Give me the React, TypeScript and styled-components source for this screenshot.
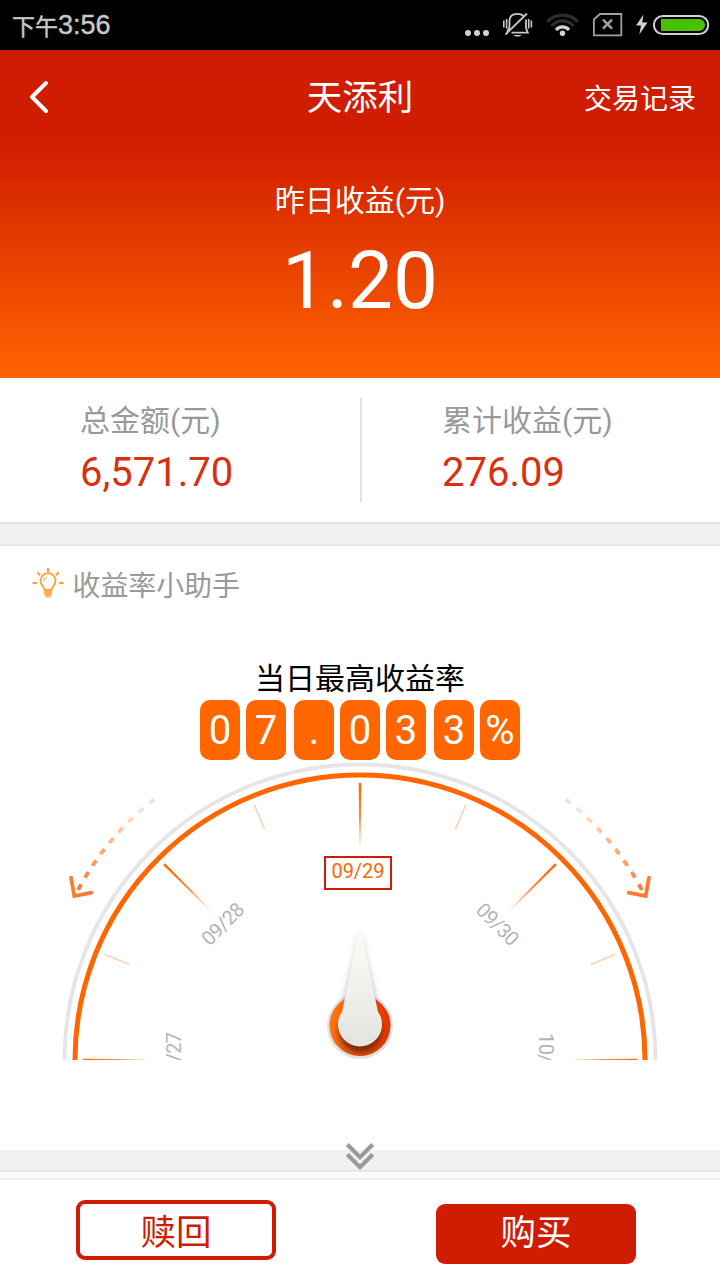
import React from 'react';
import styled, { createGlobalStyle } from 'styled-components';

const RED = '#d01c00';
const ORANGE = '#ff6600';

const GlobalStyle = createGlobalStyle`
  * { box-sizing: border-box; }
  body {
    margin: 0;
    background: #fff;
    font-family: Roboto, "Noto Sans CJK SC", sans-serif;
  }
`;

const Screen = styled.div`
  width: 720px;
  height: 1280px;
  display: flex;
  flex-direction: column;
  overflow: hidden;
  background: #fff;
`;

const StatusBar = styled.div`
  height: 50px;
  flex: none;
  display: flex;
  align-items: center;
  justify-content: space-between;
  padding: 0 10px 0 12px;
  background: #000;
`;

const Clock = styled.div`
  display: flex;
  align-items: center;
  height: 50px;
  color: #c8c8c8;
  font: 27px/50px "Liberation Sans", sans-serif;
  -webkit-text-stroke: 0.4px #c8c8c8;
`;

const ClockPeriod = styled.span`
  font: 400 23px/48px "Noto Sans CJK SC", sans-serif;
`;

const StatusIcons = styled.div`
  display: flex;
  height: 50px;
`;

const Hero = styled.header`
  height: 328px;
  flex: none;
  display: flex;
  flex-direction: column;
  color: #fff;
  background: linear-gradient(#c61a04 0, #d01c02 20px, #d01c00 90px, #ff6400 328px);
`;

const NavBar = styled.nav`
  height: 94px;
  display: grid;
  grid-template-columns: 1fr auto 1fr;
  grid-template-rows: 94px;
  align-items: center;
  padding: 0 24px 0 28px;
`;

const NavTitle = styled.h1`
  margin: 0 4px 0 0;
  padding-top: 3px;
  font-size: 35.5px;
  font-weight: 400;
  line-height: 91px;
`;

const NavLink = styled.span`
  justify-self: end;
  padding-top: 6px;
  font-size: 28px;
  line-height: 88px;
`;

const HeroLabel = styled.div`
  margin-top: 37px;
  text-align: center;
  font-size: 30px;
  line-height: 40px;
`;

const HeroValue = styled.div`
  margin-top: 12px;
  text-align: center;
  font-size: 80px;
  line-height: 96px;
`;

const Stats = styled.section`
  height: 144px;
  flex: none;
  display: flex;
  padding: 20px 0;
`;

const Stat = styled.div<{ $divided?: boolean }>`
  width: ${p => (p.$divided ? 362 : 358)}px;
  padding-top: 1px;
  padding-left: 80px;
  border-right: ${p => (p.$divided ? '2px solid #e2e2e2' : 'none')};
`;

const StatLabel = styled.div`
  color: #999;
  font-size: 30px;
  line-height: 44px;
`;

const StatValue = styled.div`
  margin-top: 4px;
  color: #d93010;
  font-size: 40px;
  line-height: 52px;
`;

const SectionGap = styled.div`
  height: 24px;
  flex: none;
  border-top: 2px solid #e2e2e2;
  border-bottom: 2px solid #e8e8e8;
  background: #f0f0f0;
`;

const Helper = styled.section`
  height: 604px;
  flex: none;
  display: flex;
  flex-direction: column;
`;

const HelperTitle = styled.div`
  display: flex;
  align-items: center;
  gap: 8.5px;
  height: 76px;
  padding-left: 32px;
  color: #999;
  font-size: 28px;
`;

const HelperText = styled.span`
  padding-top: 5px;
  line-height: 71px;
  letter-spacing: -0.1px;
`;

const RateLabel = styled.div`
  margin-top: 35px;
  height: 43px;
  text-align: center;
  color: #000;
  font-size: 30px;
  line-height: 44px;
`;

const Digits = styled.div`
  display: flex;
  justify-content: center;
`;

const Digit = styled.span<{ $wide?: boolean }>`
  width: 40px;
  height: 60px;
  margin-left: ${p => (p.$wide ? 8 : 6)}px;
  border-radius: 10px;
  background: ${ORANGE};
  color: #fff;
  text-align: center;
  font-size: 40px;
  line-height: 62px;
  &:first-child { margin-left: 0; }
`;

const Gauge = styled.svg`
  display: block;
  flex: none;
  font-family: Roboto, sans-serif;
  font-size: 20px;
`;

const DayLabels = styled.g`
  fill: #b4b4b4;
  letter-spacing: -0.6px;
`;

const MoreStrip = styled.div`
  height: 22px;
  flex: none;
  display: flex;
  justify-content: center;
  background: #f0f0f0;
  border-bottom: 2px solid #e8e8e8;
`;

const MoreIcon = styled.svg`
  margin-top: -8px;
  flex: none;
`;

const Footer = styled.footer`
  flex: 1;
  border-top: 6px solid #fffaf7;
`;

const Actions = styled.div`
  display: flex;
  justify-content: space-between;
  align-items: flex-start;
  height: 102px;
  padding: 20px 84px 0 76px;
  border-top: 2px solid #eee;
`;

const ActionButton = styled.button<{ $primary?: boolean }>`
  width: 200px;
  height: 60px;
  margin: ${p => (p.$primary ? 4 : 0)}px 0 0;
  padding: ${p => (p.$primary ? '0 0 3px' : '6px 0 0')};
  border: ${p => (p.$primary ? 'none' : `4px solid ${RED}`)};
  border-radius: 9px;
  background: ${p => (p.$primary ? RED : '#fff')};
  color: ${p => (p.$primary ? '#fff' : RED)};
  font-family: inherit;
  font-size: 35.5px;
  line-height: 46px;
`;

const BellOff = () => (
  <svg width="45" height="50" viewBox="495 0 45 50" fill="none" stroke="#c8c8c8" strokeWidth="1.800">
    <path d="M509.500 27.500V21c0-5 3.500-7.200 8-7.200 2.500 0 4.500.8 6 2.200M526 19.500v8.500l1.800 4.700h-16.300" />
    <path d="M509.500 27l-2.300 5M505.500 34.500l21.500-21" />
    <path d="M503.800 20.500v7M506.600 19v9.500M528.700 19v9.500M531.400 20.500v7" strokeWidth="1.600" />
    <path d="M513.500 35h8c-1 2-7 2-8 0z" fill="#c8c8c8" stroke="none" />
  </svg>
);

const Wifi = () => (
  <svg width="46" height="50" viewBox="540 0 46 50" fill="none" strokeWidth="3.200">
    <path d="M547.300 21.700a21 21 0 0 1 30.400 0" stroke="#2e2e2e" />
    <path d="M551.500 26a14.500 14.500 0 0 1 22 0" stroke="#2e2e2e" />
    <path d="M556 30a8.300 8.300 0 0 1 13 0" stroke="#d2d2d2" />
    <circle cx="562.500" cy="33.300" r="2.700" fill="#d2d2d2" />
  </svg>
);

const NoSim = () => (
  <svg width="47" height="50" viewBox="586 0 47 50" fill="none" stroke="#a0a0a0">
    <path d="M600 14H621.300V35.300H593.900V19.500Z" strokeWidth="1.800" />
    <path d="M603 19.700l9 9M612 19.700l-9 9" strokeWidth="2.600" />
  </svg>
);

const Battery = () => (
  <svg width="77" height="50" viewBox="633 0 77 50">
    <path d="M643.500 14.500l-7.500 11h5l-1.700 9 8.200-12h-5.300z" fill="#d2d2d2" />
    <rect x="653.900" y="15.900" width="54.300" height="18.200" rx="9.100" fill="none" stroke="#d2d2d2" strokeWidth="2" />
    <path d="M661 19h38a6 6 0 0 1 0 12h-38z" fill="#48c200" />
  </svg>
);

const Bulb = () => (
  <svg width="32" height="36" viewBox="32 566 32 36" fill="none" stroke="#ffa037" strokeWidth="2">
    <path d="M44.500 590c0-3-4-4.500-4-9.300a7.500 7.500 0 0 1 15 0c0 4.800-4 6.300-4 9.300z" strokeWidth="1.800" />
    <path d="M44 590h8v4l-2 3.500h-4l-2-3.500z" fill="#ffb054" stroke="none" />
    <path d="M43.700 581a4 4 0 0 1 3.300-3.700" strokeWidth="1" />
    <path d="M48 568v4.300M37.200 572.200l3 3M58.800 572.200l-3 3M32.500 583h4.500M59 583h4.500" />
  </svg>
);

const CX = 360;
const CY = 1060;

const SwipeArrow = () => (
  <g fill="none">
    <path d="M154.300 799.300Q106 837 77.500 891" stroke="url(#fade)" strokeWidth="3.800" strokeDasharray="6.500 7.600" />
    <path d="M71 877.700L74.300 896L91.300 892.700" stroke="#ff7a30" strokeWidth="3.800" strokeLinecap="round" />
  </g>
);

const Dial = () => (
  <Gauge width="720" height="300" viewBox="0 760 720 300">
    <defs>
      <linearGradient id="fade" gradientUnits="userSpaceOnUse" x1="154" y1="800" x2="78" y2="890">
        <stop offset="0" stopColor="#e9e7e5" />
        <stop offset=".18" stopColor="#ffe2d0" />
        <stop offset=".55" stopColor="#ffb080" />
        <stop offset="1" stopColor="#ff7a30" />
      </linearGradient>
      <linearGradient id="tick" gradientUnits="userSpaceOnUse" x1="0" y1="783" x2="0" y2="850">
        <stop offset="0" stopColor="#ff6600" />
        <stop offset=".5" stopColor="#ff8a3c" />
        <stop offset="1" stopColor="#ff8a3c" stopOpacity="0" />
      </linearGradient>
      <linearGradient id="hub">
        <stop offset="0" stopColor="#ff7614" />
        <stop offset="1" stopColor="#e03600" />
      </linearGradient>
      <linearGradient id="needle" x1="0" y1="0" x2="0" y2="1">
        <stop offset="0" stopColor="#fdfdfa" />
        <stop offset="1" stopColor="#e3e3df" />
      </linearGradient>
      <filter id="shadow" x="-50%" y="-20%" width="200%" height="140%">
        <feGaussianBlur stdDeviation="3.200" />
      </filter>
      <clipPath id="hubClip">
        <circle cx="360" cy="1025.500" r="30.500" />
      </clipPath>
    </defs>

    <circle cx={CX} cy={CY} r="295.500" fill="none" stroke="#e5e5e5" strokeWidth="3.800" />
    <circle cx={CX} cy={CY} r="285" fill="none" stroke={ORANGE} strokeWidth="5" />

    {[-90, -45, 0, 45, 90].map(a => (
      <path key={a} d="M358.700 783h2.600l-.6 67h-1.400z" fill="url(#tick)" transform={`rotate(${a} ${CX} ${CY})`} />
    ))}
    {[-67.5, -22.5, 22.5, 67.5].map(a => (
      <path key={a} d="M360 783.500V810.500" stroke="#ffd2b4" strokeWidth="1.700" transform={`rotate(${a} ${CX} ${CY})`} />
    ))}

    <SwipeArrow />
    <g transform="translate(720 0) scale(-1 1)"><SwipeArrow /></g>

    <rect x="325" y="857" width="66" height="32" fill="#fff" stroke={RED} strokeWidth="2" />
    <text x="358" y="878" textAnchor="middle" fill={ORANGE}>09/29</text>
    <DayLabels>
      <text textAnchor="middle" transform="translate(227.500 929) rotate(-45)">09/28</text>
      <text textAnchor="middle" transform="translate(492.500 929) rotate(45)">09/30</text>
      <text textAnchor="end" transform="translate(181 1032.500) rotate(-90)">09/27</text>
      <text transform="translate(539 1033) rotate(90)">10/01</text>
    </DayLabels>

    <circle cx="360" cy="1026" r="33" fill="#e0e0e0" />
    <path d="M360 934L379 1012H341Z" fill="#777" opacity=".5" filter="url(#shadow)" />
    <circle cx="360" cy="1025.500" r="30.500" fill="url(#hub)" />
    <g clipPath="url(#hubClip)">
      <circle cx="360" cy="1032" r="21" fill="#4a1400" opacity=".7" filter="url(#shadow)" />
    </g>
    <path d="M359.500 926h1L377.800 1011.500A22 22 0 1 1 342.200 1011.500Z" fill="url(#needle)" />
  </Gauge>
);

const RATE = ['0', '7', '.', '0', '3', '3', '%'];

export default function App() {
  return (
    <Screen>
      <GlobalStyle />
      <StatusBar>
        <Clock><ClockPeriod>下午</ClockPeriod>3:56</Clock>
        <StatusIcons>
          <svg width="33" height="50" viewBox="462 0 33 50" fill="#d2d2d2">
            <circle cx="468" cy="33" r="3" />
            <circle cx="477" cy="33" r="3" />
            <circle cx="486" cy="33" r="3" />
          </svg>
          <BellOff />
          <Wifi />
          <NoSim />
          <Battery />
        </StatusIcons>
      </StatusBar>

      <Hero>
        <NavBar>
          <svg width="22" height="36" viewBox="28 79 22 36" fill="none" stroke="#fff" strokeWidth="4" strokeLinecap="round" strokeLinejoin="round">
            <path d="M46 83L32 97L46 111" />
          </svg>
          <NavTitle>天添利</NavTitle>
          <NavLink>交易记录</NavLink>
        </NavBar>
        <HeroLabel>昨日收益(元)</HeroLabel>
        <HeroValue>1.20</HeroValue>
      </Hero>

      <Stats>
        <Stat $divided>
          <StatLabel>总金额(元)</StatLabel>
          <StatValue>6,571.70</StatValue>
        </Stat>
        <Stat>
          <StatLabel>累计收益(元)</StatLabel>
          <StatValue>276.09</StatValue>
        </Stat>
      </Stats>

      <SectionGap />

      <Helper>
        <HelperTitle><Bulb /><HelperText>收益率小助手</HelperText></HelperTitle>
        <RateLabel>当日最高收益率</RateLabel>
        <Digits>
          {RATE.map((d, i) => (
            <Digit key={i} $wide={i === 2 || i === 5}>{d}</Digit>
          ))}
        </Digits>
        <Dial />
      </Helper>

      <MoreStrip>
        <MoreIcon width="30" height="30" viewBox="345 1142 30 30" fill="none" stroke="#999" strokeWidth="4">
          <path d="M347.300 1144.500L360 1157.200L372.700 1144.500M347.300 1154.500L360 1167.200L372.700 1154.500" />
        </MoreIcon>
      </MoreStrip>

      <Footer>
        <Actions>
          <ActionButton>赎回</ActionButton>
          <ActionButton $primary>购买</ActionButton>
        </Actions>
      </Footer>
    </Screen>
  );
}
